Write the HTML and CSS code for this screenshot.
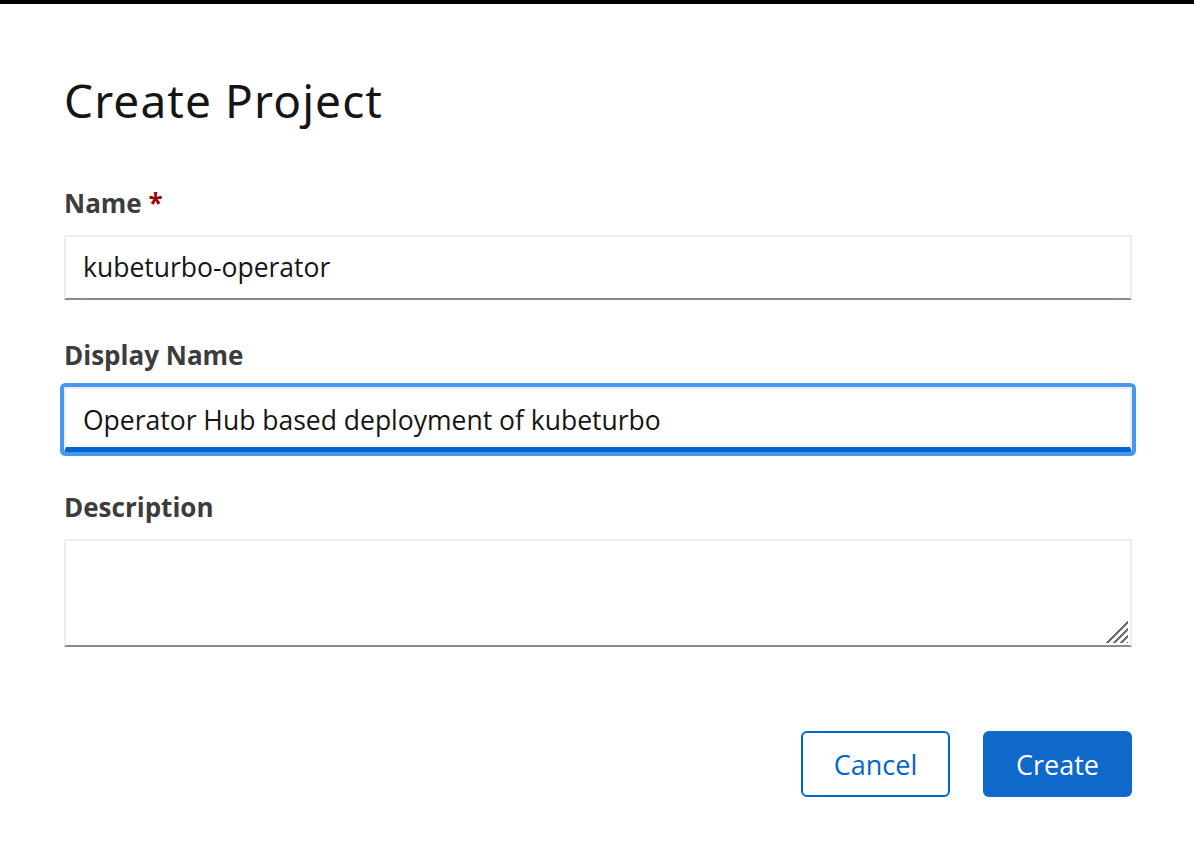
FILE: index.html
```html
<!DOCTYPE html>
<html>
<head>
<meta charset="utf-8">
<link rel="stylesheet" href="styles.css">
</head>
<body>
<div class="topbar"></div>
<div class="modal">
  <h1 class="title">Create Project</h1>
  <form class="form">
    <div class="group">
      <label class="label">Name <span class="req">*</span></label>
      <div class="input">kubeturbo-operator</div>
    </div>
    <div class="group">
      <label class="label">Display Name</label>
      <div class="input focused">Operator Hub based deployment of kubeturbo</div>
    </div>
    <div class="group">
      <label class="label">Description</label>
      <div class="textarea"><span class="grip"></span></div>
    </div>
    <div class="actions">
      <button type="button" class="btn secondary">Cancel</button>
      <button type="button" class="btn primary">Create</button>
    </div>
  </form>
</div>
</body>
</html>
```
FILE: styles.css
```css
html, body {
  margin: 0;
  padding: 0;
  background: #fff;
}
body {
  font-family: "Open Sans", "Liberation Sans", sans-serif;
  color: #151515;
}
.topbar {
  height: 4px;
  background: #000;
}
.modal {
  padding: 0 62px 0 64px;
}
.title {
  margin: 0;
  padding-top: 66px;
  font-family: "Noto Sans", "Open Sans", sans-serif;
  font-weight: 400;
  font-size: 46px;
  line-height: 60px;
  letter-spacing: 1.1px;
  color: #151515;
}
.form {
  display: flex;
  flex-direction: column;
  margin-top: 55px;
}
.group {
  display: flex;
  flex-direction: column;
}
.group + .group {
  margin-top: 37px;
}
.label {
  font-weight: 700;
  font-size: 26px;
  line-height: 36px;
  color: #3b3c3e;
  margin-bottom: 14px;
}
.req {
  color: #a30000;
}
.input {
  box-sizing: border-box;
  height: 65px;
  border: 2px solid #eeeeee;
  border-bottom: 2px solid #8a8d90;
  padding: 0 17px;
  font-size: 26.5px;
  line-height: 60px;
  color: #151515;
}
.input.focused {
  border-bottom: 5px solid #0066cc;
  box-shadow: 0 0 0 4px #4597f0;
  border-radius: 2px;
  line-height: 62px;
}
.textarea {
  position: relative;
  box-sizing: border-box;
  height: 108px;
  border: 2px solid #eeeeee;
  border-bottom: 2px solid #8a8d90;
}
.grip {
  position: absolute;
  right: 2px;
  bottom: 2px;
  width: 24px;
  height: 24px;
  background: repeating-linear-gradient(135deg, transparent 0 3px, #6a6e73 3px 5px);
  clip-path: polygon(100% 0, 100% 100%, 0 100%);
}
.actions {
  display: flex;
  justify-content: flex-end;
  gap: 33px;
  margin-top: 84px;
}
.btn {
  box-sizing: border-box;
  width: 149px;
  height: 66px;
  border-radius: 6px;
  font-family: "Open Sans", "Liberation Sans", sans-serif;
  font-size: 27px;
  cursor: pointer;
}
.btn.secondary {
  background: #fff;
  color: #0066cc;
  border: 2px solid #0066cc;
}
.btn.primary {
  background: #0f69cb;
  color: #fff;
  border: none;
}
```
